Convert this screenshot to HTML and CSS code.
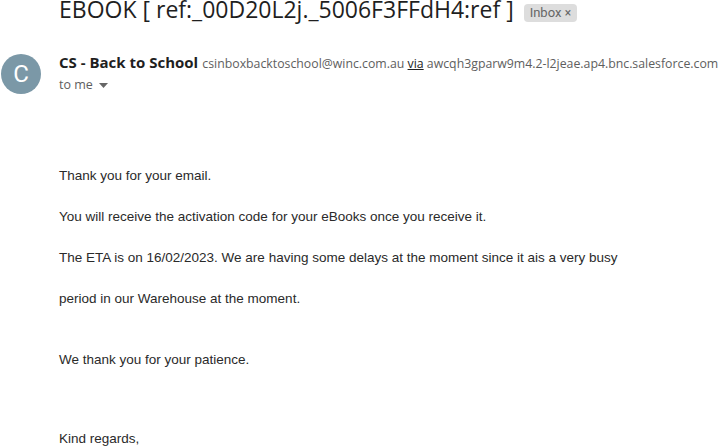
FILE: index.html
```html
<!DOCTYPE html>
<html>
<head>
<meta charset="utf-8">
<link rel="stylesheet" href="styles.css">
</head>
<body>
<div class="page">
  <div class="subject-row">
    <h1 class="subject">EBOOK [ ref:_00D20L2j._5006F3FFdH4:ref ]</h1>
    <span class="chip">Inbox <span class="chip-x">×</span></span>
  </div>
  <div class="sender-row">
    <div class="avatar">C</div>
    <div class="sender-info">
      <div class="from"><span class="name">CS - Back to School</span> <span class="addr">csinboxbacktoschool@winc.com.au <u class="via">via</u> awcqh3gparw9m4.2-l2jeae.ap4.bnc.salesforce.com</span></div>
      <div class="tome">to me <svg class="caret" width="9" height="5" viewBox="0 0 9 5"><path d="M0 0 L4.5 5 L9 0 Z" fill="#666"/></svg></div>
    </div>
  </div>
  <div class="body">
    <p class="l1">Thank you for your email.</p>
    <p class="l2">You will receive the activation code for your eBooks once you receive it.</p>
    <p class="l2">The ETA is on 16/02/2023. We are having some delays at the moment since it ais a very busy</p>
    <p class="l2">period in our Warehouse at the moment.</p>
    <p class="l3">We thank you for your patience.</p>
    <p class="l4">Kind regards,</p>
  </div>
</div>
</body>
</html>
```
FILE: styles.css
```css
html, body {
  margin: 0;
  padding: 0;
  background: #fff;
}
.page {
  width: 720px;
  height: 446px;
  overflow: hidden;
}
.subject-row {
  display: flex;
  align-items: center;
  gap: 10px;
  padding-left: 59px;
  margin-top: -7px;
  height: 32px;
}
.subject {
  margin: 0;
  font-family: "Open Sans", sans-serif;
  font-weight: 400;
  font-size: 23px;
  color: #1f1f1f;
  white-space: nowrap;
}
.chip {
  background: #dddddd;
  color: #666;
  font-family: Roboto, sans-serif;
  font-size: 13px;
  border-radius: 4px;
  padding: 1px 6px;
  margin-top: 7px;
  line-height: 16px;
}
.chip-x { font-size: 12px; }
.sender-row {
  display: flex;
  gap: 18px;
  margin-top: 29px;
}
.avatar {
  width: 40px;
  height: 40px;
  border-radius: 50%;
  background: #7b98a7;
  color: #fff;
  font-family: Roboto, sans-serif;
  font-size: 24px;
  display: flex;
  align-items: center;
  justify-content: center;
  flex: none;
  margin-left: 1px;
}
.sender-info {
  font-family: "Open Sans", sans-serif;
  white-space: nowrap;
  margin-top: -2px;
}
.from { line-height: 20px; }
.name {
  font-weight: 700;
  font-size: 15px;
  color: #1f1f1f;
}
.addr {
  font-size: 12.3px;
  color: #5e5e5e;
}
.via { color: #222; }
.tome {
  font-size: 12.5px;
  color: #5e5e5e;
  line-height: 20px;
  margin-top: 1px;
  display: flex;
  align-items: center;
  gap: 6px;
}
.body {
  padding-left: 59px;
  margin-top: 73px;
  font-family: "Liberation Sans", Arial, sans-serif;
  font-size: 13.5px;
  color: #2a2a2a;
}
.body p { margin: 0; line-height: 16px; }
.body .l2 { margin-top: 25px; }
.body .l3 { margin-top: 45px; }
.body .l4 { margin-top: 63px; }
```
